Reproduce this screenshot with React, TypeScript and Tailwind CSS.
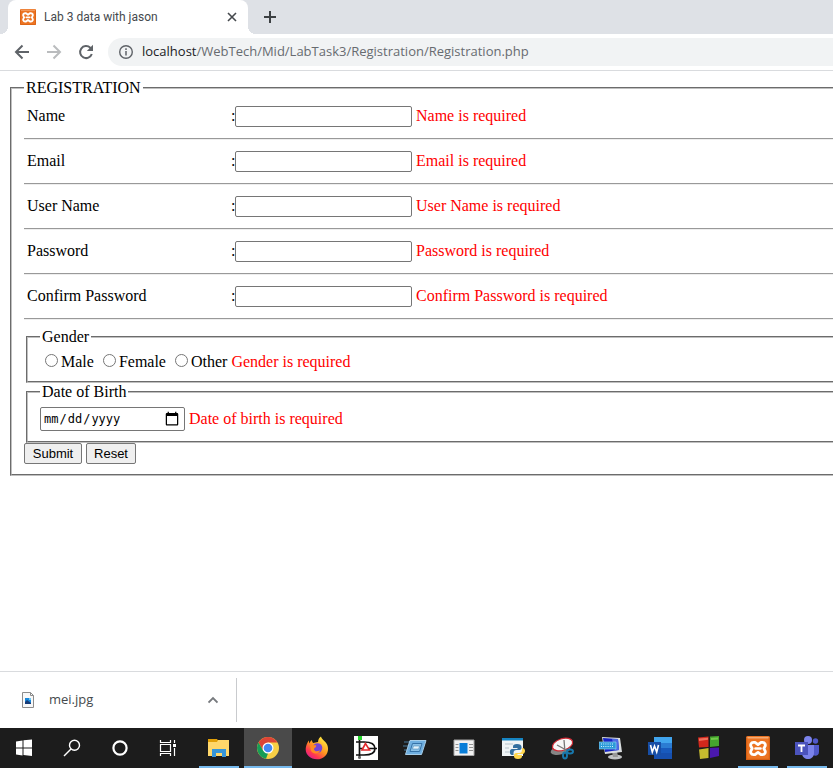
import type { ReactNode } from "react";

const fields = [
  { id: "name", label: "Name", type: "text" },
  { id: "email", label: "Email", type: "text" },
  { id: "username", label: "User Name", type: "text" },
  { id: "password", label: "Password", type: "password" },
  { id: "confirm", label: "Confirm Password", type: "password" },
];

function XamppIcon({ className }: { className: string }) {
  return (
    <svg viewBox="0 0 24 24" className={className} fill="none" aria-hidden="true">
      <rect width="24" height="24" rx="1.5" fill="#ec7423" />
      <path d="M1.500 1.800h21" stroke="#f7b98a" strokeWidth="1.200" />
      <path d="M.6 2v21.400h22.800V2" stroke="#d85f12" strokeWidth="1.200" />
      <path
        d="M9 6.300H7.500C5 6.300 4 9 5.200 10.700L6.200 12.500 5.200 14.300C4 16 5 18.700 7.500 18.700H9L12 16.400 15 18.700H16.500C19 18.700 20 16 18.800 14.300L17.800 12.500 18.800 10.700C20 9 19 6.300 16.500 6.300H15L12 8.600Z"
        stroke="#fff"
        strokeWidth="2.800"
        strokeLinejoin="round"
      />
      <path d="M9.500 12.500h5" stroke="#fff" strokeWidth="2.600" strokeLinecap="round" />
    </svg>
  );
}

function Icon({ children }: { children: ReactNode }) {
  return (
    <svg viewBox="0 0 24 24" className="size-6" fill="none" aria-hidden="true">
      {children}
    </svg>
  );
}

function TabStrip() {
  return (
    <div className="flex h-[34px] items-stretch bg-[#dee1e6] pl-2">
      <div className="relative flex w-60 items-center rounded-t-lg bg-white pl-3 pr-2.5">
        <span className="absolute bottom-0 -left-2 size-2 bg-[radial-gradient(circle_at_0_0,#dee1e6_8px,white_8px)]" />
        <span className="absolute bottom-0 -right-2 size-2 bg-[radial-gradient(circle_at_100%_0,#dee1e6_8px,white_8px)]" />
        <XamppIcon className="size-4 shrink-0" />
        <span className="ml-2 flex-1 whitespace-nowrap font-['Roboto',sans-serif] text-[12px] text-[#45494d]">Lab 3 data with jason</span>
        <button type="button" aria-label="Close tab" className="flex size-3 items-center justify-center">
          <svg viewBox="0 0 10 10" className="size-2.5" stroke="#45494d" strokeWidth="1.600">
            <path d="M1 1l8 8M9 1l-8 8" />
          </svg>
        </button>
      </div>
      <button type="button" aria-label="New tab" className="ml-4 flex w-3 items-center justify-center">
        <svg viewBox="0 0 12 12" className="size-3" stroke="#3c4043" strokeWidth="2">
          <path d="M6 0v12M0 6h12" />
        </svg>
      </button>
    </div>
  );
}

function Toolbar() {
  return (
    <div className="flex h-[37px] items-center border-b border-[#d9dbde] bg-white pl-3.5">
      <button type="button" aria-label="Back" className="mr-4">
        <svg viewBox="0 0 16 16" className="size-4" fill="none" stroke="#5f6368" strokeWidth="2">
          <path d="M15 8H2M8.500 1.500L2 8l6.500 6.500" />
        </svg>
      </button>
      <button type="button" aria-label="Forward" className="mr-4">
        <svg viewBox="0 0 16 16" className="size-4" fill="none" stroke="#babcbe" strokeWidth="2">
          <path d="M1 8h13M7.500 1.500L14 8l-6.500 6.500" />
        </svg>
      </button>
      <button type="button" aria-label="Reload" className="mr-3.5">
        <svg viewBox="0 0 16 16" className="size-4" fill="none">
          <path d="M13.800 10A6 6 0 1 1 12.300 3.800L14 5.500" stroke="#5f6368" strokeWidth="2" />
          <path d="M15 .8V7H8.800Z" fill="#5f6368" />
        </svg>
      </button>
      <div className="flex h-7 flex-1 items-center rounded-l-full bg-[#f1f3f4] pl-2.5">
        <svg viewBox="0 0 16 16" className="size-4" fill="none" aria-hidden="true">
          <circle cx="8" cy="8" r="6.300" stroke="#5f6368" strokeWidth="1.400" />
          <path d="M8 7v4.500M8 4.300V6" stroke="#5f6368" strokeWidth="1.500" />
        </svg>
        <span className="ml-2 whitespace-nowrap text-[13px] text-[#676b70]">
          <span className="text-[#202124]">localhost</span>/WebTech/Mid/LabTask3/Registration/Registration.php
        </span>
      </div>
    </div>
  );
}

function RegistrationForm() {
  return (
    <form className="-mr-10 pt-2 pl-2.5 font-['Liberation_Serif',serif] text-[16px] leading-[18px] text-black">
      <fieldset className="border-2 border-[#c0c0c0] pt-1.5 pb-2.5 pl-3 [border-style:groove]">
        <legend className="px-0.5">REGISTRATION</legend>
        {fields.map((f) => (
          <div key={f.id} className="mb-2 flex flex-col gap-2">
            <div className="flex h-[27px] items-start pt-[3px] pl-[3px] leading-5">
              <label htmlFor={f.id} className="w-[204px]">{f.label}</label>
              <span className="w-1">:</span>
              <input
                id={f.id}
                type={f.type}
                className="h-[21px] w-[177px] rounded-[2px] border border-[#767676] bg-white px-0.5 font-['Liberation_Sans',sans-serif] text-[13px]"
              />
              <span className="ml-1 text-[#ff0000]">{f.label} is required</span>
            </div>
            <hr className="h-0.5 border-t border-b border-t-[#999] border-b-[#eee]" />
          </div>
        ))}
        <div className="ml-0.5">
          <fieldset className="border-2 border-[#c0c0c0] px-3 pt-1.5 pb-2.5 [border-style:groove]">
            <legend className="px-0.5">Gender</legend>
            <div className="flex h-[19px] items-end">
              {["Male", "Female", "Other"].map((g) => (
                <label key={g} className="mr-1 flex items-center">
                  <input type="radio" name="gender" value={g} className="mr-[3px] mb-1 ml-[5px] size-[13px]" />
                  {g}
                </label>
              ))}
              <span className="text-[#ff0000]">Gender is required</span>
            </div>
          </fieldset>
          <fieldset className="border-2 border-[#c0c0c0] px-3 pt-1.5 pb-2.5 [border-style:groove]">
            <legend className="px-0.5">Date of Birth</legend>
            <div className="flex items-center">
              <input
                type="date"
                aria-label="Date of Birth"
                className="h-6 w-[145px] rounded-[2px] border border-[#767676] bg-white px-0.5 font-['DejaVu_Sans_Mono',monospace] text-[12px] [&::-webkit-calendar-picker-indicator]:size-4 [&::-webkit-calendar-picker-indicator]:bg-contain"
              />
              <span className="ml-1 text-[#ff0000]">Date of birth is required</span>
            </div>
          </fieldset>
        </div>
        <div className="flex gap-1 font-['Liberation_Sans',sans-serif] text-[13px] leading-[15px]">
          <button type="submit" className="h-[21px] w-[58px] rounded-[2px] border border-[#767676] bg-[#efefef]">Submit</button>
          <button type="reset" className="h-[21px] w-[50px] rounded-[2px] border border-[#767676] bg-[#efefef]">Reset</button>
        </div>
      </fieldset>
    </form>
  );
}

function DownloadShelf() {
  return (
    <div className="flex h-[57px] items-center border-t border-[#d9dbde] bg-white">
      <div className="flex h-11 w-[237px] items-center border-r border-[#c9cbce] pl-[22px]">
        <svg viewBox="0 0 12 16" className="h-4 w-3" fill="none" aria-hidden="true">
          <path d="M.5.5h8l3 3v12H.5Z" fill="#f8f8f8" stroke="#8c8c8c" />
          <path d="M8.500.5v3h3" stroke="#8c8c8c" />
          <path d="M3 6h6v6H3Z" fill="#1788dc" />
          <path d="M3 10l2-2 4 3v1H3Z" fill="#173b77" />
          <path d="M7 6h2v2H7Z" fill="#72caf5" />
        </svg>
        <span className="ml-[15px] flex-1 text-[13px] text-[#45494d]">mei.jpg</span>
        <button type="button" aria-label="Download options" className="mr-[18px]">
          <svg viewBox="0 0 10 10" className="size-2.5" fill="none" stroke="#76797d" strokeWidth="1.800">
            <path d="M.5 7.500L5 3l4.500 4.500" />
          </svg>
        </button>
      </div>
    </div>
  );
}

const systemItems: { name: string; icon: ReactNode }[] = [
  { name: "Start", icon: <path d="M4 5.500l6.500-1V11.500H4ZM11.500 4.300L20 3.500v8h-8.500ZM4 12.500h6.500v7L4 18.500ZM11.500 12.500H20v7.500l-8.500-1Z" fill="#fff" /> },
  { name: "Search", icon: <g stroke="#fff" strokeWidth="1.400"><circle cx="14.500" cy="9.300" r="5" /><path d="M11 13l-7 7" /></g> },
  { name: "Cortana", icon: <circle cx="12" cy="12" r="6.600" stroke="#fff" strokeWidth="2.200" /> },
  { name: "Task view", icon: <g stroke="#fff" strokeWidth="1.200"><path d="M4.500 8.500h10v7h-10ZM4.500 4v2.500h10V4M4.500 20v-2.500h10V20M18.500 4v3M18.500 12v8" /><path d="M17 8h3v3h-3Z" fill="#fff" stroke="none" /></g> },
];

const appItems: { name: string; icon: ReactNode; state?: "open" | "active" }[] = [
  {
    name: "File Explorer",
    state: "open",
    icon: <><path d="M1 3h9l1.500 2H22v15H1Z" fill="#e2a008" /><path d="M1 6h9l1-2h11v16H1Z" fill="#ffd76a" /><path d="M5 13h14v8h-4v-4H9v4H5Z" fill="#3695d8" /></>,
  },
  {
    name: "Chrome",
    state: "active",
    icon: <><circle cx="12" cy="12" r="11" fill="#f8cf45" /><path d="M2.500 6.500A11 11 0 0 1 21.500 6.500H12l-4.800 8.300Z" fill="#dc4437" /><path d="M2.500 6.500L7.200 14.800 12 17.500l-2 5.300A11 11 0 0 1 2.500 6.500Z" fill="#179c57" /><circle cx="12" cy="12" r="5.500" fill="#fff" /><circle cx="12" cy="12" r="4.300" fill="#4387f4" /></>,
  },
  {
    name: "Firefox",
    icon: (
      <>
        <defs>
          <linearGradient id="fox" x1="20" y1="2" x2="5" y2="22" gradientUnits="userSpaceOnUse">
            <stop stopColor="#fff044" /><stop offset=".5" stopColor="#ff9520" /><stop offset=".8" stopColor="#ff3750" /><stop offset="1" stopColor="#e0218c" />
          </linearGradient>
        </defs>
        <path d="M13 6C13 3 15 1 16 .5c.4 3 5 5 6.300 8.500C25 16 20 23.300 12 23.300S-1 17 1.200 10C1.700 8 2.800 5.500 4 4.500v3L6.500 4 8 7Z" fill="url(#fox)" />
        <circle cx="12.500" cy="12" r="4.800" fill="#7545d7" />
        <path d="M5 9l6 .2c1 2-2 2.500-2 4 1 3 4 2 6 1-1 4-7 4.500-9 .5Z" fill="#ff8a22" />
      </>
    ),
  },
  {
    name: "Dia",
    icon: <><path d="M0 0h24v24H0Z" fill="#fff" /><path d="M5.500 3v19M2 6h8c7.500 0 11 2.500 11 6.500S17.500 19 10 19H2M6 12.500h17" stroke="#111" strokeWidth="1.700" /><path d="M11.500 7.500l-3.500 6.500h7.500Z" fill="#fff" stroke="#e3282c" strokeWidth="1.600" /><path d="M4 0h4v4H4Z" fill="#24d42b" /><circle cx="5.500" cy="21.500" r="1.500" fill="#666" /></>,
  },
  {
    name: "Run",
    icon: <><path d="M1 6h7M0 10h6M1 14h4" stroke="#487b9e" strokeWidth="1.200" /><path d="M7 4.500h16l-4.500 14H2.500Z" fill="#6fafe0" stroke="#a7cee9" /><path d="M9.500 7.500h9.500l-2.500 8H7Z" fill="#8ac0e6" stroke="#3673a8" /><path d="M10.500 10h6l-.8 3H9.500Z" fill="#e6f5fc" stroke="#4d89bb" strokeWidth=".6" /></>,
  },
  {
    name: "Viewer",
    icon: <><path d="M2 4h20v15.500H2Z" fill="#f1f1f1" stroke="#a5a5a5" /><path d="M7.500 7h8v10.500h-8Z" fill="#087dd8" /><path d="M3.500 8.500h3M3.500 11.500h3M3.500 14.500h3M17 8.500h4M17 11.500h4M17 14.500h4" stroke="#929292" /></>,
  },
  {
    name: "Python",
    icon: (
      <>
        <path d="M1 2h21v18H1Z" fill="#f0f4f6" /><path d="M1 2h21v2.500H1Z" fill="#1685c3" />
        <path d="M4 8h8M4 12h4M4 16h4" stroke="#b6c2ca" />
        <path d="M16 8c-3 0-4 .8-4 3v1h4.500v1H11c-3 0-3 6 0 6h1.500v-2c0-2 1-3 3-3h3c1 0 2-1 2-2v-1c0-2-1.500-3-4.500-3Z" fill="#346f9f" />
        <path d="M17 23c3 0 4-1 4-3v-1h-4.500v-1H22c3-1 2.500-6-.5-6H21v2c0 2-1 3-3 3h-3c-1 0-2 1-2 2v1c0 2 1 3 4 3Z" fill="#ffd64c" />
      </>
    ),
  },
  {
    name: "Snipping Tool",
    icon: <><ellipse cx="10.500" cy="14" rx="10" ry="4.500" fill="#858585" transform="rotate(-14 10.500 14)" /><ellipse cx="12.500" cy="8.500" rx="10.500" ry="5.800" fill="#f7f7f7" stroke="#cf2934" strokeWidth="1.200" transform="rotate(-18 12.500 8.500)" /><path d="M14 4l1 12M7 9l11 6" stroke="#777" strokeWidth="1.300" /><g stroke="#1878ad" strokeWidth="2"><ellipse cx="15" cy="19.500" rx="2" ry="3" /><ellipse cx="20" cy="15.500" rx="3" ry="1.900" /></g></>,
  },
  {
    name: "On-Screen Keyboard",
    icon: <><ellipse cx="16" cy="21" rx="7" ry="2.500" fill="#c1c3c5" /><path d="M13 15h5l1 6h-5Z" fill="#999" /><path d="M3 1l18 1 2 14-17 2Z" fill="#d9dddf" /><path d="M4 2l15 1 1 11-14 2Z" fill="#1725c5" /><path d="M13 3l6 0 1 11-4 .5Z" fill="#4b6ae5" /><path d="M0 6h17v7H0Z" fill="#2c9ad8" stroke="#8acbed" strokeWidth=".7" /><path d="M2 8h13M2 10.500h13" stroke="#d4f3ff" strokeDasharray="1 1.200" /></>,
  },
  {
    name: "Word",
    icon: <><path d="M6 1h18v22H6Z" fill="#164fae" /><path d="M6 1h18v6H6Z" fill="#41a5ee" /><path d="M6 7h18v5H6Z" fill="#2b7cd3" /><path d="M6 12h18v5H6Z" fill="#185abd" /><path d="M0 6h13v13H0Z" fill="#174ea6" /><path d="M2.500 9l1.800 7L6.500 10l2.200 6 1.800-7" stroke="#fff" strokeWidth="1.600" /></>,
  },
  {
    name: "Colour Squares",
    icon: <><path d="M1 1.500L11.500.5v10.500L2 11.500Z" fill="#d2281c" /><path d="M13 .5L22 0v10l-9 1Z" fill="#45a52e" /><path d="M2 13.500l9.500-1.500v10L3 23Z" fill="#c6bb2e" /><path d="M13 12l9-.5V20l-9 2Z" fill="#4a18ad" /><path d="M2 2.500l9-.8v2L2 5Z" fill="#f0705c" /><path d="M14 2l7-.5v2l-7 .5Z" fill="#72cb4b" /></>,
  },
  { name: "XAMPP", state: "open", icon: null },
  {
    name: "Teams",
    state: "open",
    icon: <><circle cx="20.500" cy="5" r="2.700" fill="#5059c9" /><circle cx="13" cy="4" r="4" fill="#7b83eb" /><path d="M17 9h7v7c0 3-3 5-6 3Z" fill="#5059c9" /><path d="M7 9h12v8c0 8-12 8-12 0Z" fill="#7b83eb" /><path d="M0 6h13v13H0Z" fill="#4b53bc" /><path d="M3 9.500h7M6.500 9.500V16" stroke="#fff" strokeWidth="1.800" /></>,
  },
];

function Taskbar() {
  return (
    <div className="flex h-10 overflow-hidden bg-[#1c1c1c]">
      {systemItems.map((item) => (
        <button key={item.name} type="button" aria-label={item.name} className="flex w-12 shrink-0 items-center justify-center">
          <Icon>{item.icon}</Icon>
        </button>
      ))}
      <div className="ml-[3px] flex gap-px">
        {appItems.map((item) => (
          <button
            key={item.name}
            type="button"
            aria-label={item.name}
            className={`relative flex w-12 shrink-0 items-center justify-center ${item.state === "active" ? "bg-[#4a4a4a]" : ""}`}
          >
            {item.icon ? <Icon>{item.icon}</Icon> : <XamppIcon className="size-6" />}
            {item.state === "active" && <span className="absolute inset-x-0 bottom-0 h-0.5 bg-[#76b9ed]" />}
            {item.state === "open" && <span className="absolute inset-x-1 bottom-0 h-0.5 bg-[#76b9ed]" />}
          </button>
        ))}
      </div>
    </div>
  );
}

export default function App() {
  return (
    <div className="flex min-h-screen flex-col overflow-hidden bg-white font-['Open_Sans',sans-serif]">
      <TabStrip />
      <Toolbar />
      <main className="flex-1 overflow-hidden">
        <RegistrationForm />
      </main>
      <DownloadShelf />
      <Taskbar />
    </div>
  );
}
